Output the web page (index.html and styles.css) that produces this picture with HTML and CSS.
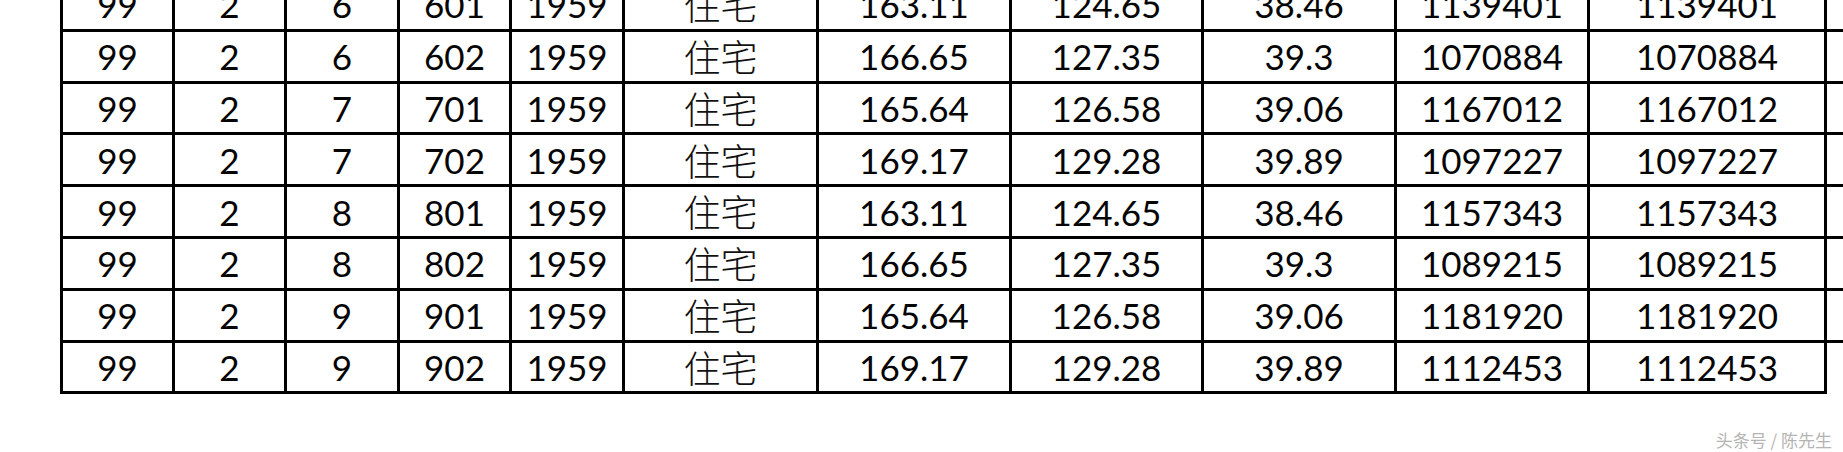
FILE: index.html
```html
<!DOCTYPE html>
<html lang="zh-CN">
<head>
<meta charset="utf-8">
<title>住宅</title>
<link rel="stylesheet" href="styles.css">
</head>
<body>
<div class="page">
  <div class="sheet">
    <div class="row"><div class="cell">99</div><div class="cell">2</div><div class="cell">6</div><div class="cell">601</div><div class="cell">1959</div><div class="cell cjk">住宅</div><div class="cell">163.11</div><div class="cell">124.65</div><div class="cell">38.46</div><div class="cell">1139401</div><div class="cell">1139401</div><div class="cell edge"></div></div>
    <div class="row"><div class="cell">99</div><div class="cell">2</div><div class="cell">6</div><div class="cell">602</div><div class="cell">1959</div><div class="cell cjk">住宅</div><div class="cell">166.65</div><div class="cell">127.35</div><div class="cell">39.3</div><div class="cell">1070884</div><div class="cell">1070884</div><div class="cell edge"></div></div>
    <div class="row"><div class="cell">99</div><div class="cell">2</div><div class="cell">7</div><div class="cell">701</div><div class="cell">1959</div><div class="cell cjk">住宅</div><div class="cell">165.64</div><div class="cell">126.58</div><div class="cell">39.06</div><div class="cell">1167012</div><div class="cell">1167012</div><div class="cell edge"></div></div>
    <div class="row"><div class="cell">99</div><div class="cell">2</div><div class="cell">7</div><div class="cell">702</div><div class="cell">1959</div><div class="cell cjk">住宅</div><div class="cell">169.17</div><div class="cell">129.28</div><div class="cell">39.89</div><div class="cell">1097227</div><div class="cell">1097227</div><div class="cell edge"></div></div>
    <div class="row"><div class="cell">99</div><div class="cell">2</div><div class="cell">8</div><div class="cell">801</div><div class="cell">1959</div><div class="cell cjk">住宅</div><div class="cell">163.11</div><div class="cell">124.65</div><div class="cell">38.46</div><div class="cell">1157343</div><div class="cell">1157343</div><div class="cell edge"></div></div>
    <div class="row"><div class="cell">99</div><div class="cell">2</div><div class="cell">8</div><div class="cell">802</div><div class="cell">1959</div><div class="cell cjk">住宅</div><div class="cell">166.65</div><div class="cell">127.35</div><div class="cell">39.3</div><div class="cell">1089215</div><div class="cell">1089215</div><div class="cell edge"></div></div>
    <div class="row"><div class="cell">99</div><div class="cell">2</div><div class="cell">9</div><div class="cell">901</div><div class="cell">1959</div><div class="cell cjk">住宅</div><div class="cell">165.64</div><div class="cell">126.58</div><div class="cell">39.06</div><div class="cell">1181920</div><div class="cell">1181920</div><div class="cell edge"></div></div>
    <div class="row"><div class="cell">99</div><div class="cell">2</div><div class="cell">9</div><div class="cell">902</div><div class="cell">1959</div><div class="cell cjk">住宅</div><div class="cell">169.17</div><div class="cell">129.28</div><div class="cell">39.89</div><div class="cell">1112453</div><div class="cell">1112453</div><div class="cell edge end"></div></div>
  </div>
  <div class="mark">头条号 / 陈先生</div>
</div>
</body>
</html>
```

FILE: styles.css
```css
html, body {
  margin: 0;
  padding: 0;
  background: #fff;
}

.page {
  width: 1843px;
  height: 452px;
  overflow: hidden;
  display: flex;
  flex-direction: column;
}

.sheet {
  margin: -20px 0 0 60px;
  padding: 0 0 3px 3px;
  background: #000;
  display: grid;
  grid-template-columns: 109px 109px 110px 109px 110px 191px 190px 189px 190px 190px 234px 16px;
  grid-auto-rows: 48.8px;
  gap: 3px;
  width: max-content;
}

.row {
  display: contents;
}

.cell {
  background: #fff;
  display: flex;
  align-items: center;
  justify-content: center;
  font-family: Lato, "Open Sans", "Liberation Sans", sans-serif;
  font-size: 35px;
  line-height: 1.2;
  color: #050505;
  white-space: nowrap;
}

.cell.cjk {
  font-family: "Noto Sans CJK SC", "Noto Sans CJK JP", sans-serif;
  font-size: 37px;
  font-weight: 300;
  color: #111;
}

.cell.end {
  margin-bottom: -3px;
}

.mark {
  align-self: flex-end;
  margin: 33px 11px 0 0;
  font-family: "Noto Sans CJK SC", "Noto Sans CJK JP", sans-serif;
  font-size: 17px;
  color: #b4b4b4;
  white-space: nowrap;
}
```
